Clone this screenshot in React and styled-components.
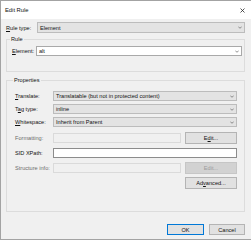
import React from 'react';
import styled, { createGlobalStyle } from 'styled-components';

const Global = createGlobalStyle`
  html, body { margin: 0; padding: 0; background: #ffffff; }
  body { font-family: "Liberation Sans", Arial, sans-serif; font-size: 5.6px; color: #111; }
  * { box-sizing: border-box; }
`;

const Window = styled.div`
  width: 251px;
  height: 240px;
  display: flex;
  flex-direction: column;
  border-top: 1px solid #a3a3a3;
  border-left: 1px solid #a3a3a3;
  border-bottom: 1px solid #a3a3a3;
  background: #f0f0f0;
  overflow: hidden;
`;

const TitleBar = styled.div`
  height: 18px;
  flex: none;
  background: #ffffff;
  display: flex;
  align-items: center;
  justify-content: space-between;
  padding: 0 6px 0 4px;
  font-size: 5.8px;
  line-height: 8px;
`;

const Body = styled.div`
  flex: 1;
  display: flex;
  flex-direction: column;
  padding: 3px 6px 0 5px;
`;

const TopRow = styled.div`
  display: grid;
  grid-template-columns: 31px 1fr;
  align-items: center;
  height: 11px;
`;

const Label = styled.span`
  white-space: nowrap;
  line-height: 8px;
  color: ${(p) => (p.$dim ? '#6d6d6d' : '#111')};
`;

const Key = styled.span`
  text-decoration: underline;
  text-underline-offset: 1px;
  text-decoration-thickness: 0.5px;
`;

const Select = styled.div`
  height: ${(p) => p.$h || 10}px;
  display: flex;
  align-items: center;
  justify-content: space-between;
  padding: 0 2px 0 2px;
  background: ${(p) => (p.$editable ? '#ffffff' : '#e3e3e3')};
  border: 1px solid ${(p) => (p.$editable ? '#a9a9a9' : '#bcbcbc')};
  white-space: nowrap;
  overflow: hidden;
  line-height: 8px;
  grid-column: ${(p) => p.$span || 'auto'};
`;

const TextBox = styled.div`
  height: 10px;
  background: ${(p) => (p.$readonly ? '#f0f0f0' : '#ffffff')};
  border: 1px solid ${(p) => (p.$readonly ? '#dadada' : '#8c8c8c')};
  grid-column: ${(p) => p.$span || 'auto'};
`;

const Group = styled.fieldset`
  margin: ${(p) => p.$mt}px 0 0 0;
  border: 1px solid #dcdcdc;
  padding: ${(p) => p.$pad};
  min-width: 0;
`;

const Legend = styled.legend`
  padding: 0 1px;
  margin-left: -2px;
  line-height: 8px;
  font-size: 5.6px;
`;

const ElementRow = styled.div`
  display: grid;
  grid-template-columns: 24px 1fr;
  align-items: center;
  height: 10px;
`;

const PropRow = styled.div`
  display: grid;
  grid-template-columns: 34px 1fr 52px;
  column-gap: 4px;
  align-items: center;
  height: ${(p) => p.$h}px;
  margin-top: ${(p) => p.$mt || 0}px;
`;

const PropList = styled.div`
  display: flex;
  flex-direction: column;
`;

const Button = styled.div`
  height: ${(p) => p.$h || 12}px;
  width: ${(p) => p.$w || 52}px;
  grid-column: ${(p) => p.$col || 'auto'};
  display: flex;
  align-items: center;
  justify-content: center;
  line-height: 8px;
  background: ${(p) => (p.$disabled ? '#d2d2d2' : '#e1e1e1')};
  border: 1px solid ${(p) => (p.$primary ? '#0078d7' : p.$disabled ? '#c6c6c6' : '#b4b4b4')};
  color: ${(p) => (p.$disabled ? '#9b9b9b' : '#111')};
`;

const Footer = styled.div`
  display: flex;
  justify-content: flex-end;
  gap: 5px;
  margin-top: 12px;
`;

const Chevron = () => (
  <svg width="4" height="3" viewBox="0 0 4 3" style={{ flex: 'none' }}>
    <polyline points="0.3,0.6 2,2.3 3.7,0.6" fill="none" stroke="#606060" strokeWidth="0.7" />
  </svg>
);

const CloseIcon = () => (
  <svg width="5" height="5" viewBox="0 0 5 5">
    <path d="M0.5 0.5 L4.5 4.5 M4.5 0.5 L0.5 4.5" stroke="#2b2b2b" strokeWidth="0.8" />
  </svg>
);

export default function App() {
  return (
    <>
      <Global />
      <Window>
        <TitleBar>
          <span>Edit Rule</span>
          <CloseIcon />
        </TitleBar>
        <Body>
          <TopRow>
            <Label><Key>R</Key>ule type:</Label>
            <Select $h={11}>
              <span>Element</span>
              <Chevron />
            </Select>
          </TopRow>

          <Group $mt={2} $pad="3px 2px 15px 5px">
            <Legend>Rule</Legend>
            <ElementRow>
              <Label><Key>E</Key>lement:</Label>
              <Select $editable>
                <span>alt</span>
                <Chevron />
              </Select>
            </ElementRow>
          </Group>

          <Group $mt={4} $pad="7px 7px 22px 8px">
            <Legend>Properties</Legend>
            <PropList>
              <PropRow $h={10}>
                <Label><Key>T</Key>ranslate:</Label>
                <Select $span="2 / 4">
                  <span>Translatable (but not in protected content)</span>
                  <Chevron />
                </Select>
              </PropRow>
              <PropRow $h={10} $mt={3}>
                <Label>T<Key>a</Key>g type:</Label>
                <Select $span="2 / 4">
                  <span>inline</span>
                  <Chevron />
                </Select>
              </PropRow>
              <PropRow $h={10} $mt={3}>
                <Label><Key>W</Key>hitespace:</Label>
                <Select $span="2 / 4">
                  <span>Inherit from Parent</span>
                  <Chevron />
                </Select>
              </PropRow>
              <PropRow $h={12} $mt={5}>
                <Label $dim>Formatting:</Label>
                <TextBox $readonly />
                <Button>E<Key>d</Key>it...</Button>
              </PropRow>
              <PropRow $h={12} $mt={3}>
                <Label>SID XPath:</Label>
                <TextBox $span="2 / 4" />
              </PropRow>
              <PropRow $h={12} $mt={3}>
                <Label $dim>Structure info:</Label>
                <TextBox $readonly />
                <Button $disabled>Edit...</Button>
              </PropRow>
              <PropRow $h={12} $mt={3}>
                <Button $col="3">Ad<Key>v</Key>anced...</Button>
              </PropRow>
            </PropList>
          </Group>

          <Footer>
            <Button $primary $w={37} $h={11}>OK</Button>
            <Button $w={36} $h={11}>Cancel</Button>
          </Footer>
        </Body>
      </Window>
    </>
  );
}
